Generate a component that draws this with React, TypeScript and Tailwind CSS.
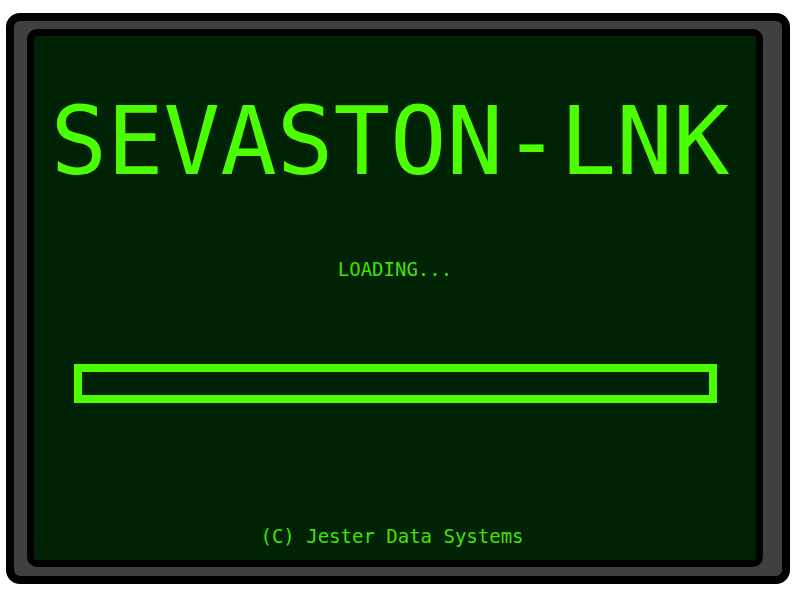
const BootScreen = () => {
  return (
    <div className="w-[800px] h-[600px] bg-white pl-[6px] pt-[13px]">
      {/* Outer bezel */}
      <div className="w-[784px] h-[571px] rounded-[14px] border-[8px] border-black bg-[#404040] pl-[13px] pt-[8px] pr-[19px] pb-[9px]">
        {/* Screen */}
        <div
          className="h-full rounded-[10px] border-[7px] border-black bg-[#002306] flex flex-col items-center text-[#4cff00]"
          style={{ fontFamily: '"DejaVu Sans Mono", monospace' }}
        >
          <h1 className="mt-[59px] text-[94px] leading-none ml-[-10px]">SEVASTON-LNK</h1>
          <p className="mt-[71px] text-[19px] leading-none text-[#44e000]">LOADING...</p>
          <div className="mt-[85px] w-[643px] h-[39px] border-[8px] border-[#4cff00]" />
          <p className="mt-[124px] text-[19px] leading-none text-[#44e000] ml-[-6px]">
            (C) Jester Data Systems
          </p>
        </div>
      </div>
    </div>
  )
}

export default BootScreen
